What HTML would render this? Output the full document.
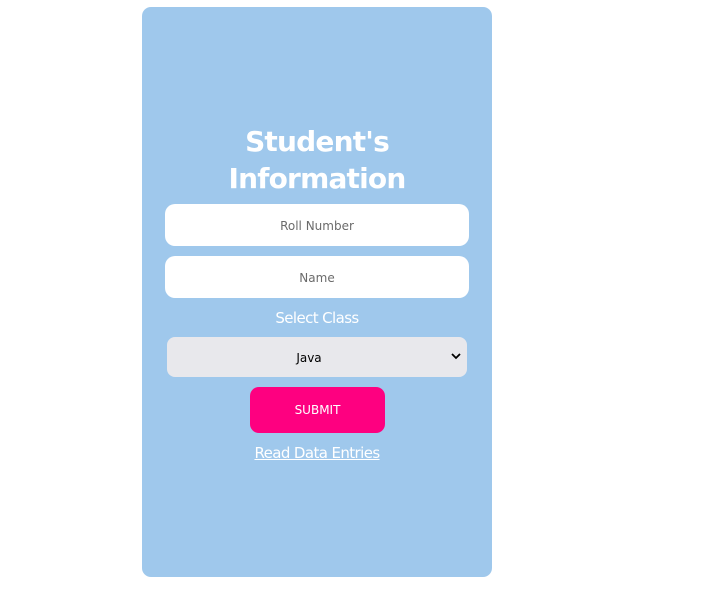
<!DOCTYPE html>
<html><head><style>
body{margin:0;background:#fff;width:713px;height:598px;position:relative;font-family:"DejaVu Sans","Liberation Sans",sans-serif;}
.card{position:absolute;left:142px;top:7px;width:350px;height:570px;background:#9fc8ec;border-radius:9px;}
h1{position:absolute;left:0;width:350px;top:116px;margin:0;text-align:center;color:#fff;font-size:28px;line-height:37px;font-weight:bold;letter-spacing:-0.8px;}
.inp{position:absolute;left:23px;width:304px;height:42px;background:#fff;border-radius:10px;text-align:center;line-height:44px;font-size:12px;color:#6b6b6b;}
.lbl{position:absolute;left:0;width:350px;top:302px;text-align:center;color:#fff;font-size:15px;letter-spacing:-0.6px;}
.sel{position:absolute;left:25px;top:330px;width:300px;height:40px;background:#e8e8ec;border-radius:8px;font-size:12px;color:#000;line-height:42px;}
.sel span{position:absolute;left:0;width:284px;text-align:center;}
.sel svg{position:absolute;right:6px;top:16px;}
.btn{position:absolute;left:108px;top:380px;width:135px;height:46px;background:#fe0080;border-radius:9px;color:#fff;font-size:12px;text-align:center;line-height:47px;}
.lnk{position:absolute;left:0;width:350px;top:437px;text-align:center;color:#fff;font-size:15px;text-decoration:underline;letter-spacing:-0.6px;}
</style></head><body>
<div class="card">
<h1>Student's<br>Information</h1>
<div class="inp" style="top:197px">Roll Number</div>
<div class="inp" style="top:249px">Name</div>
<div class="lbl">Select Class</div>
<div class="sel"><span>Java</span><svg width="10" height="7" viewBox="0 0 10 7"><path d="M1 1l4 4 4-4" stroke="#000" stroke-width="1.8" fill="none"/></svg></div>
<div class="btn">SUBMIT</div>
<div class="lnk">Read Data Entries</div>
</div>
</body></html>
